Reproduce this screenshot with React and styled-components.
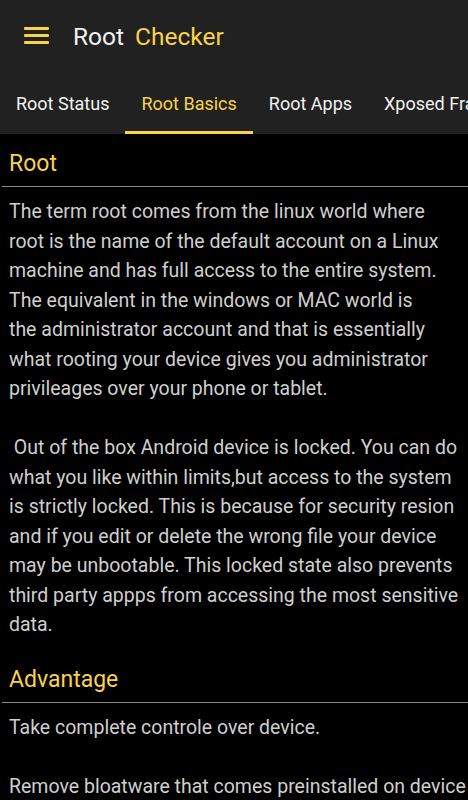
import React from "react";
import styled, { createGlobalStyle } from "styled-components";

const GlobalStyle = createGlobalStyle`
*{
  margin: 0;
  padding: 0;
  box-sizing: border-box;
}
body{
  background-color: #000;
  font-family: Roboto, "Noto Sans", sans-serif;
  width: 468px;
  height: 800px;
  overflow: hidden;
}
`;

const yellow = "#f9d24b";

const Header = styled.header`
  background-color: #212121;
`;
const Toolbar = styled.div`
  height: 72px;
  display: flex;
  align-items: center;
  padding-left: 24px;
`;
const Burger = styled.div`
  width: 25px;
  display: flex;
  flex-direction: column;
  gap: 4px;
  margin-right: 24px;
  margin-top: -1px;
`;
const Bar = styled.span`
  display: block;
  height: 3px;
  background-color: ${yellow};
  border-radius: 1px;
`;
const Title = styled.h1`
  font-size: 24.5px;
  font-weight: 400;
  color: #f2f2f2;
  span {
    color: ${yellow};
    margin-left: 11px;
  }
`;
const Tabs = styled.nav`
  height: 62px;
  display: flex;
  white-space: nowrap;
  overflow: hidden;
`;
const Tab = styled.div`
  padding: 3px 16px 0;
  display: flex;
  align-items: center;
  font-size: 18px;
  color: ${(p) => (p.active ? yellow : "#f2f2f2")};
  border-bottom: 3px solid ${(p) => (p.active ? yellow : "transparent")};
`;
const Content = styled.main`
  padding-top: 15px;
`;
const Heading = styled.h2`
  font-size: 23px;
  font-weight: 400;
  color: ${yellow};
  padding: 2px 0 9px 9px;
  line-height: 26px;
`;
const Divider = styled.hr`
  border: none;
  height: 1px;
  background-color: #8a8a8a;
  margin-left: 2px;
  margin-bottom: 10px;
`;
const Text = styled.p`
  font-size: 19.5px;
  line-height: 29.5px;
  color: #cfcfcf;
  padding: 0 9px;
  white-space: ${(p) => (p.single ? "nowrap" : "pre-wrap")};
  margin-bottom: ${(p) => p.gap || "29.5px"};
`;

export default function App() {
  return (
    <>
      <GlobalStyle />
      <Header>
        <Toolbar>
          <Burger>
            <Bar />
            <Bar />
            <Bar />
          </Burger>
          <Title>
            Root<span>Checker</span>
          </Title>
        </Toolbar>
        <Tabs>
          <Tab>Root Status</Tab>
          <Tab active>Root Basics</Tab>
          <Tab>Root Apps</Tab>
          <Tab>Xposed Framework</Tab>
        </Tabs>
      </Header>
      <Content>
        <Heading>Root</Heading>
        <Divider />
        <Text>
          {"The term root comes from the linux world where root is the name of the default account on a Linux machine and has full access to the entire system. The equivalent in the windows or MAC world is\nthe administrator account and that is essentially what rooting your device gives you administrator privileages over your phone or tablet."}
        </Text>
        <Text gap="25px">
          {" Out of the box Android device is locked. You can do what you like within limits,but access to the system is strictly locked. This is because for security resion and if you edit or delete the wrong file your device may be unbootable. This locked state also prevents third party appps from accessing the most sensitive data."}
        </Text>
        <Heading>Advantage</Heading>
        <Divider />
        <Text>Take complete controle over device.</Text>
        <Text single>Remove bloatware that comes preinstalled on device</Text>
      </Content>
    </>
  );
}
